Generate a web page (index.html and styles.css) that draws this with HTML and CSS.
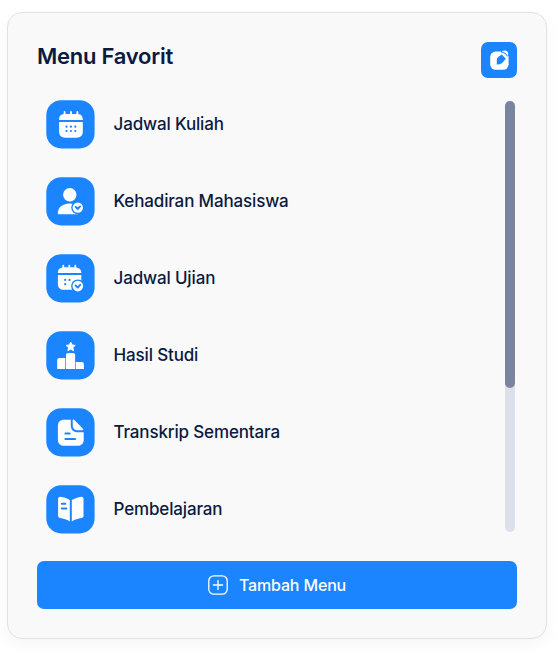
FILE: index.html
```html
<!DOCTYPE html>
<html lang="id">
<head>
<meta charset="utf-8">
<title>Menu Favorit</title>
<link rel="stylesheet" href="styles.css">
</head>
<body>
<main class="card">
  <header class="head">
    <h1 class="title">Menu Favorit</h1>
    <button class="edit" aria-label="Edit">
      <svg viewBox="0 0 36 36"><rect x="9.2" y="9.6" width="18.4" height="18.2" rx="5.5" fill="#fff"/><path class="cut" d="M15.8 22.4v-4.2c0-1.5.6-2.6 1.7-3.5l3.3-2.3 4 4.4-3.2 3.8c-1.1 1.3-2.8 2-5.8 1.8z"/><path class="cut" d="M20.1 8.4l8.2-.8v6l-2.3.8c-.8-1.8-2.5-3.5-5.9-3.9z"/><path d="M20.7 9.8c1.7-1.6 4-1.8 5.4-.5 1.4 1.3 1.5 3 .4 4.6-.8-2.3-2.9-3.9-5.8-4.1z" fill="#fff"/></svg>
    </button>
  </header>
  <div class="body">
    <ul class="list">
      <li class="item">
        <svg class="icon" viewBox="6 5 49 49"><rect class="tile" x="6.3" y="5.2" width="48.3" height="48.3" rx="15"/><path fill="#fff" d="M19.1 25v-.8c0-2.9 1.9-4.9 4.6-5.1V17a.9.9 0 0 1 1.8 0v2h4.6v-2a.9.9 0 0 1 1.8 0v2h4.6v-2a.9.9 0 0 1 1.8 0v2.1c2.7.3 4.5 2.3 4.5 5.1v.8zM19.1 27h23.7v9.5c0 4-2.2 6.2-6.2 6.2H25.3c-4 0-6.2-2.2-6.2-6.2z"/><path class="dots" d="M26.5 31.7h.01M30.9 31.7h.01M35.3 31.7h.01M26.5 36h.01M30.9 36h.01M35.3 36h.01"/></svg>
        <span class="label">Jadwal Kuliah</span>
      </li>
      <li class="item">
        <svg class="icon" viewBox="6 5 49 49"><rect class="tile" x="6.3" y="5.2" width="48.3" height="48.3" rx="15"/><circle cx="29.8" cy="22.7" r="6.7" fill="#fff"/><path fill="#fff" d="M17.8 40.7c.3-5.6 5.4-9.2 12-9.2 3.2 0 6 .8 8.2 2.4v8.4H19.2c-.9 0-1.5-.6-1.4-1.6z"/><circle class="cut" cx="37.8" cy="35.6" r="6.6"/><circle cx="37.8" cy="35.6" r="5.2" fill="#fff"/><path class="check" d="m35.7 34.9 2 2.1 2.4-2.6"/></svg>
        <span class="label">Kehadiran Mahasiswa</span>
      </li>
      <li class="item">
        <svg class="icon" viewBox="6 5 49 49"><rect class="tile" x="6.3" y="5.2" width="48.3" height="48.3" rx="15"/><path fill="#fff" d="M17.9 24v-.8c0-2.6 1.7-4.5 4.5-4.8v-1.8a.9.9 0 0 1 1.8 0v1.7h4.2v-1.7a.9.9 0 0 1 1.8 0v1.7h4.2v-1.7a.9.9 0 0 1 1.8 0v1.8c3 .3 5.1 2.2 5.1 4.8v.8zM17.9 26h23.4v14.7H24.1c-4 0-6.2-2-6.2-6z"/><path class="dots" d="M25.2 30.9h.01M29.5 30.9h.01M25.2 35.2h.01"/><circle class="cut" cx="37.8" cy="37.1" r="6.7"/><circle cx="37.8" cy="37.1" r="5.3" fill="#fff"/><path class="check" d="m35.6 36.4 2.1 2.2 2.5-2.8"/></svg>
        <span class="label">Jadwal Ujian</span>
      </li>
      <li class="item">
        <svg class="icon" viewBox="6 5 49 49"><rect class="tile" x="6.3" y="5.2" width="48.3" height="48.3" rx="15"/><path fill="#fff" d="M17.2 43V34.2c0-1.5.8-2.3 2.3-2.3h5.8V43zM26 43V29.3c0-1.6.8-2.4 2.4-2.4h4.3c1.6 0 2.4.8 2.4 2.4V43zM35.8 43v-6.9h5.8c1.5 0 2.3.8 2.3 2.3V43z"/><path class="star" d="m30.7 16 1.4 2.9 3.1.5-2.3 2.2.6 3.1-2.8-1.5-2.8 1.5.6-3.1-2.3-2.2 3.1-.5z"/></svg>
        <span class="label">Hasil Studi</span>
      </li>
      <li class="item">
        <svg class="icon" viewBox="6 5 49 49"><rect class="tile" x="6.3" y="5.2" width="48.3" height="48.3" rx="15"/><path fill="#fff" d="M23.8 16.7h7v5.6c0 4.5 2.6 7 7 7h5.9V36.4c0 4-2.3 6.3-6.5 6.3H24.2c-4 0-6.3-2.3-6.3-6.3V23c0-4 2.1-6.3 5.9-6.3zM32.7 17.3c0-.8.8-1.1 1.4-.5l8.9 9c.7.6.3 1.5-.5 1.5h-4.7c-3.3 0-5.1-1.8-5.1-5z"/><path class="line" d="M25.4 30.4h4.3M25.4 35.9h9.7"/></svg>
        <span class="label">Transkrip Sementara</span>
      </li>
      <li class="item">
        <svg class="icon" viewBox="6 5 49 49"><rect class="tile" x="6.3" y="5.2" width="48.3" height="48.3" rx="15"/><path fill="#fff" d="M29.8 20.1v21.3c-3-1.9-6.4-3-9.6-3.4-1.3-.1-2.1-.9-2.1-2.2V18.9c0-1.4.9-2.2 2.2-2.1 3.2.3 6.7 1.5 9.5 3.3zM31.8 20.1v21.3c3-1.9 6.4-3 9.6-3.4 1.3-.1 2.1-.9 2.1-2.2V18.7c0-1.4-.9-2.1-2.2-2-3.2.4-6.7 1.6-9.5 3.4z"/><path class="line" d="M21.8 23.8h3.5M21.8 28.4h4.5"/></svg>
        <span class="label">Pembelajaran</span>
      </li>
    </ul>
    <div class="track"><div class="thumb"></div></div>
  </div>
  <button class="add">
    <svg viewBox="0 0 20 20"><rect x=".8" y=".8" width="18.4" height="18.4" rx="5"/><path d="M10 5.4v9.2M5.4 10h9.2"/></svg>
    <span>Tambah Menu</span>
  </button>
</main>
</body>
</html>
```

FILE: styles.css
```css
* { box-sizing: border-box; }
body {
  margin: 0;
  padding: 11.5px 9px 0 7px;
  height: 652px;
  overflow: hidden;
  background: #fff;
  color: #0b1a40;
  font-family: Inter, sans-serif;
}
.card {
  height: 627px;
  padding: 29px 29px 0 29px;
  border: 1px solid #dfe1ed;
  border-radius: 15px;
  background: #f9f9fa;
  box-shadow: 0 6px 16px rgba(20, 25, 60, .04);
}
.head {
  display: flex;
  justify-content: space-between;
  height: 58.5px;
}
.title {
  margin: 1px 0 0;
  font-size: 22px;
  line-height: 27px;
  font-weight: 600;
  letter-spacing: -.25px;
}
button { padding: 0; border: 0; background: #1b85ff; }
.edit {
  width: 36px;
  height: 36px;
  border-radius: 7px;
}
.edit svg { display: block; width: 36px; height: 36px; }
.body {
  display: flex;
  justify-content: space-between;
  padding: 0 2px 0 9px;
}
.list {
  display: flex;
  flex-direction: column;
  gap: 28px;
  margin: 0;
  padding: 0;
  list-style: none;
}
.item {
  display: flex;
  align-items: center;
  gap: 18.5px;
  height: 49px;
  font-size: 17px;
  font-weight: 480;
  letter-spacing: -.15px;
  white-space: nowrap;
}
.label { padding-bottom: 2px; }
.icon {
  width: 49px;
  height: 49px;
}
.tile, .cut { fill: #1b85ff; }
.dots, .check, .line {
  fill: none;
  stroke: #1b85ff;
  stroke-width: 2.2;
  stroke-linecap: round;
  stroke-linejoin: round;
}
.check { stroke-width: 1.9; }
.line { stroke-width: 2; }
.star {
  fill: #fff;
  stroke: #fff;
  stroke-width: .9;
  stroke-linejoin: round;
}
.track {
  width: 10px;
  height: 431px;
  margin-top: 1px;
  border-radius: 5px;
  background: #dce0eb;
}
.thumb {
  height: 286.5px;
  border-radius: 5px;
  background: #7a849f;
}
.add {
  display: flex;
  align-items: center;
  justify-content: center;
  gap: 11px;
  width: 100%;
  height: 48px;
  margin-top: 26.5px;
  border-radius: 7px;
  color: #fff;
  font: 550 16px Inter, sans-serif;
  letter-spacing: -.15px;
}
.add svg {
  width: 20px;
  height: 20px;
  fill: none;
  stroke: #fff;
  stroke-width: 1.3;
  stroke-linecap: round;
}
```
